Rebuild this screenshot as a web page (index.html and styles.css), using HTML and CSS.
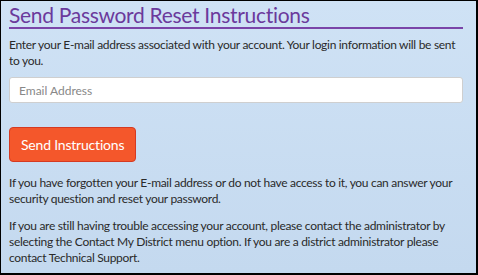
FILE: index.html
```html
<!DOCTYPE html>
<html>
<head>
<meta charset="utf-8">
<link rel="stylesheet" href="styles.css">
</head>
<body>
<div class="frame">
  <h1 class="title">Send Password Reset Instructions</h1>
  <p class="text intro">Enter your E-mail address associated with your account. Your login information will be sent to you.</p>
  <input class="email" type="text" placeholder="Email Address">
  <button class="send">Send Instructions</button>
  <p class="text">If you have forgotten your E-mail address or do not have access to it, you can answer your security question and reset your password.</p>
  <p class="text">If you are still having trouble accessing your account, please contact the administrator by selecting the Contact My District menu option. If you are a district administrator please contact Technical Support.</p>
</div>
</body>
</html>
```
FILE: styles.css
```css
html, body { margin: 0; padding: 0; }
body { width: 478px; height: 275px; overflow: hidden; }
.frame {
  box-sizing: border-box;
  width: 478px;
  height: 275px;
  border-style: solid;
  border-color: #000;
  border-width: 1px 2px 2px 1px;
  background: linear-gradient(#cfe2f5, #c4d9ef);
  padding: 0 13px 0 8px;
  font-family: Lato, "Liberation Sans", sans-serif;
  color: #2a2a2a;
}
.title {
  margin: 0;
  padding: 1px 0 0;
  font-size: 21px;
  letter-spacing: -0.3px;
  font-weight: normal;
  color: #6b3a9c;
  line-height: 25px;
  border-bottom: 2px solid #7a45a8;
}
.text {
  margin: 0;
  font-size: 12px;
  letter-spacing: -0.3px;
  line-height: 16px;
}
.intro { margin-top: 8px; }
.email {
  display: block;
  box-sizing: border-box;
  width: 100%;
  height: 26px;
  margin-top: 8px;
  padding: 0 9px;
  border: 1px solid #cfcfcf;
  border-radius: 3px;
  background: #fff;
  font-family: inherit;
  font-size: 12px;
}
.email::placeholder { color: #888; }
.send {
  display: block;
  margin-top: 24px;
  margin-bottom: 13px;
  height: 35px;
  padding: 0 11px;
  background: #f4572b;
  border: 1px solid #d53a22;
  border-radius: 4px;
  color: #fff;
  font-family: inherit;
  font-size: 14px;
  letter-spacing: -0.2px;
}
.text + .text { margin-top: 11px; }
```
